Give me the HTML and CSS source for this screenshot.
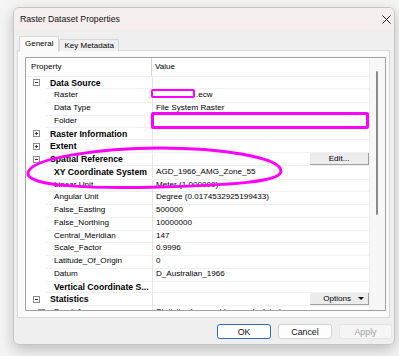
FILE: index.html
```html
<!DOCTYPE html>
<html lang="en">
<head>
  <meta charset="UTF-8">
  <title>Raster Dataset Properties</title>
  <link rel="stylesheet" href="styles.css">
</head>
<body>

<div class="window">
  <div class="titlebar">
    <span class="title">Raster Dataset Properties</span>
    <svg class="close" width="9" height="9" viewBox="0 0 9 9">
      <path d="M0.5 0.5 L8.5 8.5 M8.5 0.5 L0.5 8.5" stroke="#222" stroke-width="1" fill="none"/>
    </svg>
  </div>

  <div class="content">
    <div class="tabs">
      <div class="tab active">General</div>
      <div class="tab">Key Metadata</div>
    </div>

    <div class="panel">
      <div class="grid">
        <div class="list">
          <div class="head">
            <div class="hcell name">Property</div>
            <div class="hcell">Value</div>
          </div>

          <!-- Data Source -->
          <div class="row cat">
            <div class="gut"><span class="box minus"></span></div>
            <div class="prop">Data Source</div>
            <div class="val"></div>
          </div>
          <div class="row">
            <div class="gut"></div>
            <div class="prop">Raster</div>
            <div class="val"><span class="gap"></span>.ecw</div>
          </div>
          <div class="row">
            <div class="gut"></div>
            <div class="prop">Data Type</div>
            <div class="val">File System Raster</div>
          </div>
          <div class="row">
            <div class="gut"></div>
            <div class="prop">Folder</div>
            <div class="val"></div>
          </div>

          <div class="row cat">
            <div class="gut"><span class="box plus"></span></div>
            <div class="prop">Raster Information</div>
            <div class="val"></div>
          </div>
          <div class="row cat">
            <div class="gut"><span class="box plus"></span></div>
            <div class="prop">Extent</div>
            <div class="val"></div>
          </div>

          <!-- Spatial Reference -->
          <div class="row cat">
            <div class="gut"><span class="box minus"></span></div>
            <div class="prop">Spatial Reference</div>
            <div class="val"><span class="cellbtn">Edit...</span></div>
          </div>
          <div class="row">
            <div class="gut"></div>
            <div class="prop strong">XY Coordinate System</div>
            <div class="val">AGD_1966_AMG_Zone_55</div>
          </div>
          <div class="row">
            <div class="gut"></div>
            <div class="prop">Linear Unit</div>
            <div class="val">Meter (1.000000)</div>
          </div>
          <div class="row">
            <div class="gut"></div>
            <div class="prop">Angular Unit</div>
            <div class="val">Degree (0.0174532925199433)</div>
          </div>
          <div class="row">
            <div class="gut"></div>
            <div class="prop">False_Easting</div>
            <div class="val">500000</div>
          </div>
          <div class="row">
            <div class="gut"></div>
            <div class="prop">False_Northing</div>
            <div class="val">10000000</div>
          </div>
          <div class="row">
            <div class="gut"></div>
            <div class="prop">Central_Meridian</div>
            <div class="val">147</div>
          </div>
          <div class="row">
            <div class="gut"></div>
            <div class="prop">Scale_Factor</div>
            <div class="val">0.9996</div>
          </div>
          <div class="row">
            <div class="gut"></div>
            <div class="prop">Latitude_Of_Origin</div>
            <div class="val">0</div>
          </div>
          <div class="row">
            <div class="gut"></div>
            <div class="prop">Datum</div>
            <div class="val">D_Australian_1966</div>
          </div>
          <div class="row">
            <div class="gut"></div>
            <div class="prop strong">Vertical Coordinate S...</div>
            <div class="val"></div>
          </div>

          <!-- Statistics -->
          <div class="row cat">
            <div class="gut"><span class="box minus"></span></div>
            <div class="prop">Statistics</div>
            <div class="val"><span class="cellbtn opts">Options <span class="arrow"></span></span></div>
          </div>
          <div class="row">
            <div class="gut"><span class="box minus sub"></span></div>
            <div class="prop">Band_1</div>
            <div class="val">Statistics have not been calculated</div>
          </div>
        </div>

        <div class="scroll"><div class="thumb"></div></div>
      </div>
    </div>

    <div class="buttons">
      <button class="dlg-btn ok">OK</button>
      <button class="dlg-btn">Cancel</button>
      <button class="dlg-btn off">Apply</button>
    </div>
  </div>
</div>

<!-- highlight marks drawn over the dialog -->
<div class="mark mark-raster"></div>
<div class="mark mark-folder"></div>
<svg class="marks" width="399" height="356" viewBox="0 0 399 356">
  <path d="M28 173 C30 158 100 148 160 148 C220 148 280 157 281 171 C282 182 230 185 160 187 C90 189 26 186 28 173 Z"
        fill="none" stroke="#ff00ff" stroke-width="3"/>
</svg>

</body>
</html>
```
FILE: styles.css
```css
body {
  margin: 0;
  background-color: #f4f4f4;
  font-family: "Liberation Sans", Arial, sans-serif;
  color: #000;
  position: relative;
  width: 399px;
  height: 356px;
  overflow: hidden;
}

.window {
  margin: 7px 0 0 13px;
  width: 382px;
  height: 338px;
  box-sizing: border-box;
  border: 1px solid #c6c6c6;
  border-radius: 6px;
  background-color: #efefef;
  box-shadow: 0 5px 14px rgba(0,0,0,0.22);
  overflow: hidden;
}

.titlebar {
  height: 22px;
  background-color: #f6efef;
  display: flex;
  align-items: center;
  justify-content: space-between;
  padding: 0 3px 0 6px;
}
.title {
  font-size: 8.7px;
  color: #111;
}

.content {
  padding: 6px 4px 0 3px;
}

.tabs {
  display: flex;
  height: 14px;
  margin-left: 2px;
  position: relative;
  z-index: 1;
}
.tab {
  font-size: 8px;
  height: 11px;
  margin-top: 3px;
  padding: 0 4px;
  line-height: 11px;
  border: 1px solid #d6d6d6;
  border-bottom: none;
  background-color: #f0f0f0;
  color: #000;
}
.tab.active {
  height: 15px;
  margin-top: 0;
  line-height: 14px;
  background-color: #fafafa;
  padding: 0 5px;
}

.panel {
  height: 268px;
  box-sizing: border-box;
  border: 1px solid #d9d9d9;
  background-color: #fafafa;
  padding: 6px 3px 0 7px;
}

.grid {
  display: flex;
  height: 254px;
  box-sizing: border-box;
  border: 1px solid #a3a3a3;
  background-color: #fff;
}

.list {
  width: 344px;
  overflow: hidden;
  font-size: 8.1px;
  color: #000;
}

.head {
  display: flex;
  height: 18.6px;
  line-height: 18.6px;
  border-bottom: 1px solid #ededed;
  box-sizing: border-box;
}
.hcell {
  padding-left: 3px;
}
.hcell.name {
  width: 126px;
  box-sizing: border-box;
  padding-left: 5px;
  border-right: 1px solid #d4d4d4;
}

.row {
  display: grid;
  grid-template-columns: 20px 107px 1fr;
  height: 12.76px;
  line-height: 12.76px;
}
.gut {
  position: relative;
}
.prop {
  padding-left: 8px;
  border-right: 1px solid #e6e6e6;
  border-bottom: 1px solid #f0f0f0;
  white-space: nowrap;
  overflow: hidden;
}
.val {
  padding-left: 3px;
  border-bottom: 1px solid #f0f0f0;
  white-space: nowrap;
  position: relative;
}
.cat .prop {
  padding-left: 4px;
  font-weight: bold;
  font-size: 8.7px;
}
.prop.strong {
  font-weight: bold;
  font-size: 8.7px;
}
.gap {
  display: inline-block;
  width: 40px;
}

.box {
  position: absolute;
  left: 7px;
  top: 2.5px;
  width: 7px;
  height: 7px;
  border: 1px solid #8c8c8c;
  box-sizing: border-box;
  background-color: #fff;
}
.box::before,
.box.plus::after {
  content: "";
  position: absolute;
  background-color: #333;
}
.box::before {
  left: 1px;
  top: 2px;
  width: 3px;
  height: 1px;
}
.box.plus::after {
  left: 2px;
  top: 1px;
  width: 1px;
  height: 3px;
}
.box.sub {
  left: 12px;
}

.cellbtn {
  position: absolute;
  right: 0;
  top: 0;
  width: 59px;
  height: 12px;
  line-height: 12px;
  box-sizing: border-box;
  background-color: #ececec;
  border-right: 1px solid #a0a0a0;
  border-bottom: 1px solid #a0a0a0;
  text-align: center;
}
.cellbtn.opts {
  display: flex;
  justify-content: flex-end;
  align-items: center;
  gap: 7px;
  padding-right: 4px;
}
.arrow {
  width: 0;
  height: 0;
  border-left: 3px solid transparent;
  border-right: 3px solid transparent;
  border-top: 3px solid #111;
}

.scroll {
  width: 15px;
  border-left: 1px solid #ececec;
  background-color: #f7f7f7;
  position: relative;
}
.thumb {
  position: absolute;
  left: 6px;
  top: 13px;
  width: 2px;
  height: 144px;
  background-color: #8a8a8a;
  border-radius: 1px;
}

.buttons {
  display: flex;
  justify-content: flex-end;
  gap: 7px;
  margin: 6px -2px 0 0;
}
.dlg-btn {
  width: 54px;
  height: 15px;
  padding: 0;
  font-family: "Liberation Sans", Arial, sans-serif;
  font-size: 8.8px;
  color: #111;
  background-color: #fdfdfd;
  border: 1px solid #d2d2d2;
  border-radius: 3px;
}
.dlg-btn.ok {
  border-color: #2a6fbf;
}
.dlg-btn.off {
  width: 53px;
  color: #a0a0a0;
  background-color: #f5f5f5;
  border-color: #e6e6e6;
}

.mark {
  position: absolute;
  border: 2px solid #ff00ff;
  border-radius: 2px;
  box-sizing: border-box;
}
.mark-raster {
  left: 151px;
  top: 89px;
  width: 44px;
  height: 9px;
}
.mark-folder {
  left: 151px;
  top: 112px;
  width: 218px;
  height: 17px;
  border-width: 3px;
}

.marks {
  position: absolute;
  left: 0;
  top: 0;
  pointer-events: none;
}
```
